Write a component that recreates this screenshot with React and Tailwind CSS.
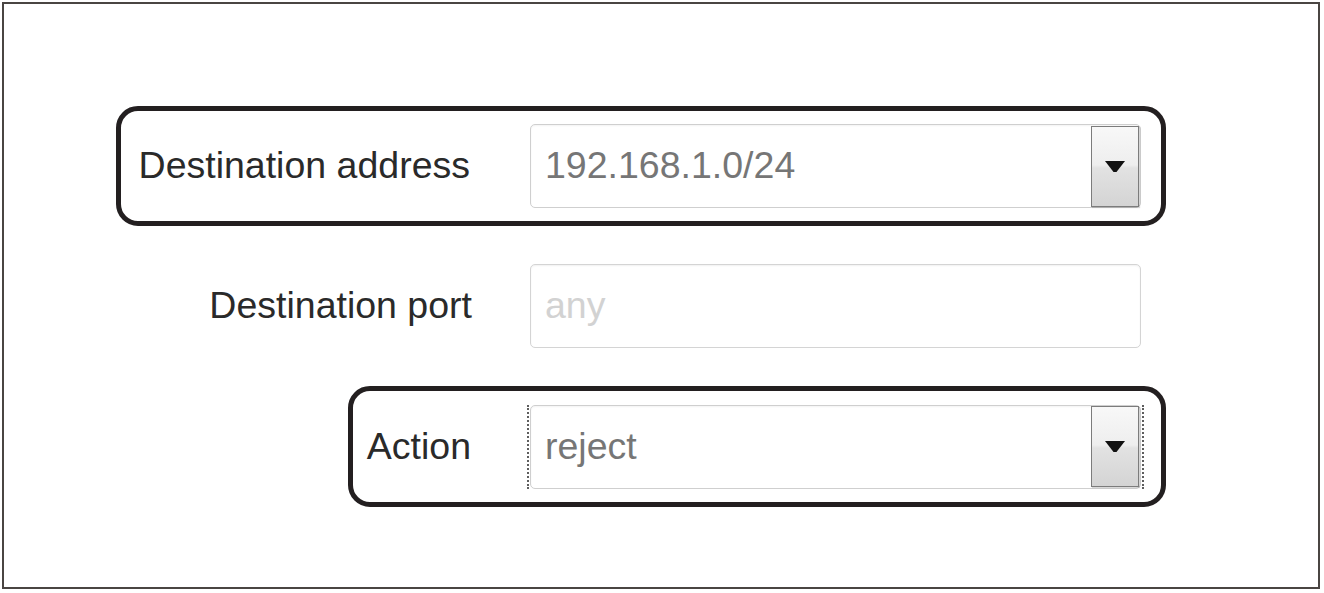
import React from "react";

const Arrow = () => (
  <div className="w-[48px] h-[81px] border border-[#7c7c7c] bg-[linear-gradient(to_bottom,#f8f8f8_0%,#eeeeee_48%,#e2e2e2_52%,#d4d4d4_100%)] flex items-center justify-center shadow-[1px_1px_1px_rgba(0,0,0,0.15)]">
    <svg width="20" height="11" viewBox="0 0 20 11">
      <path d="M0 0h20L11.5 11h-3z" fill="#111" />
    </svg>
  </div>
);

const Select = ({ value }) => (
  <div className="w-[611px] h-[84px] border border-[#cfcfcf] rounded-[5px] bg-white flex items-center justify-between pl-[14px] pr-[1px] shadow-[inset_0_1px_2px_rgba(0,0,0,0.05)]">
    <span className="text-[37.5px] text-[#767676] leading-none">{value}</span>
    <Arrow />
  </div>
);

const Input = ({ placeholder }) => (
  <div className="w-[611px] h-[84px] border border-[#d4d4d4] rounded-[5px] bg-white flex items-center pl-[14px] shadow-[inset_0_1px_2px_rgba(0,0,0,0.06)]">
    <span className="text-[37.5px] text-[#d2d2d2] leading-none">{placeholder}</span>
  </div>
);

export default function App() {
  return (
    <div className="w-[1318px] h-[587px] ml-[2px] mt-[2px] border-2 border-[#4a4542] bg-white pt-[102px] pl-[112px] font-['Liberation_Sans',Arial,sans-serif]">
      <div className="w-[1050px] flex flex-col items-end gap-[20px] text-[#2a2a2a]">
        {/* highlighted row */}
        <div className="w-[1050px] h-[120px] border-[5px] border-[#231f20] rounded-[22px] flex items-center pr-[20px]">
          <span className="flex-1 text-right text-[37.5px] leading-none pr-[60px]">Destination address</span>
          <Select value="192.168.1.0/24" />
        </div>

        <div className="h-[120px] border-[5px] border-transparent flex items-center pr-[20px]">
          <span className="text-[37.5px] leading-none pr-[58px]">Destination port</span>
          <Input placeholder="any" />
        </div>

        {/* highlighted row */}
        <div className="h-[121px] border-[5px] border-[#231f20] rounded-[22px] flex items-center pl-[14px] pr-[17px]">
          <span className="text-[37.5px] leading-none pr-[56px]">Action</span>
          <div className="border-x-2 border-dotted border-[#5e5e5e] px-[1px]">
            <Select value="reject" />
          </div>
        </div>
      </div>
    </div>
  );
}
